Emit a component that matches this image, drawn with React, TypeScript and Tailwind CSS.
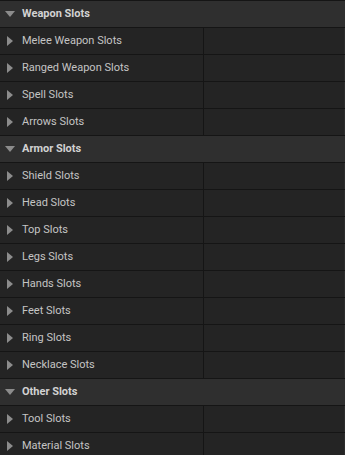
import React from 'react';

type Section = {
    title: string;
    items: string[];
};

const sections: Section[] = [
    { title: 'Weapon Slots', items: ['Melee Weapon Slots', 'Ranged Weapon Slots', 'Spell Slots', 'Arrows Slots'] },
    { title: 'Armor Slots', items: ['Shield Slots', 'Head Slots', 'Top Slots', 'Legs Slots', 'Hands Slots', 'Feet Slots', 'Ring Slots', 'Necklace Slots'] },
    { title: 'Other Slots', items: ['Tool Slots', 'Material Slots'] },
];

function DownArrow() {
    return (
        <svg width="10" height="6" viewBox="0 0 10 6" className="ml-[5px] mr-[7px] shrink-0">
            <polygon points="0,0 10,0 5,6" fill="#8c8c8c" />
        </svg>
    );
}

function RightArrow() {
    return (
        <svg width="6" height="10" viewBox="0 0 6 10" className="ml-[7px] mr-[9px] shrink-0">
            <polygon points="0,0 6,5 0,10" fill="#8c8c8c" />
        </svg>
    );
}

export default function App() {
    return (
        <div
            className="w-[345px] h-[455px] overflow-hidden bg-[#242424] border-t border-[#151515]"
            style={{ fontFamily: 'Roboto, "Liberation Sans", sans-serif' }}
        >
            {sections.map((section) => (
                <div key={section.title}>
                    {/* Category header */}
                    <div className="flex items-center h-[27px] bg-[#2f2f2f] border-b border-[#151515]">
                        <DownArrow />
                        <span className="text-[11px] font-bold text-[#d2d2d2]">{section.title}</span>
                    </div>

                    {/* Property rows */}
                    {section.items.map((item) => (
                        <div key={item} className="flex h-[27px] bg-[#242424] border-b border-[#151515]">
                            <div className="flex items-center w-[204px] border-r border-[#151515]">
                                <RightArrow />
                                <span className="text-[11px] text-[#c4c4c4]">{item}</span>
                            </div>
                            <div className="flex-1 border-r border-[#2c2c2c]" />
                        </div>
                    ))}
                </div>
            ))}
        </div>
    );
}
